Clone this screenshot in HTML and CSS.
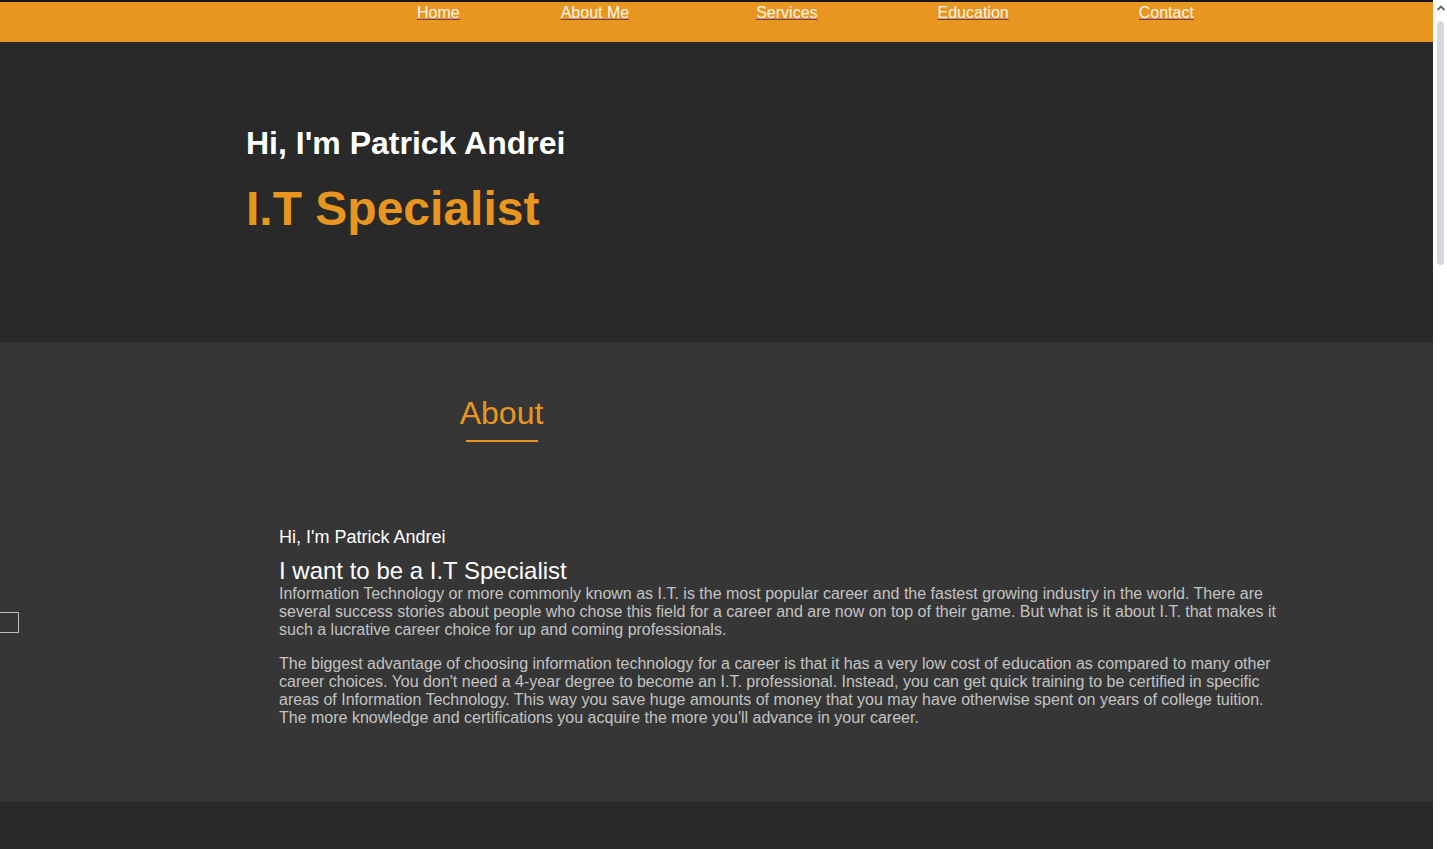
FILE: index.html
```html
<!DOCTYPE html>
<html lang="en">
<head>
<meta charset="utf-8">
<title>Patrick Andrei</title>
<link rel="stylesheet" href="styles.css">
</head>
<body>
<nav class="navbar">
  <ul class="nav-list">
    <li class="nav-item"><a href="#home" class="nav-link">Home</a></li>
    <li class="nav-item"><a href="#about" class="nav-link">About Me</a></li>
    <li class="nav-item"><a href="#services" class="nav-link">Services</a></li>
    <li class="nav-item"><a href="#education" class="nav-link">Education</a></li>
    <li class="nav-item"><a href="#contact" class="nav-link">Contact</a></li>
  </ul>
</nav>
<header class="hero" id="home">
  <h1 class="hero-hi">Hi, I'm Patrick Andrei</h1>
  <h2 class="hero-role">I.T Specialist</h2>
</header>
<section class="about" id="about">
  <div class="about-title-wrap">
    <h2 class="about-title">About</h2>
    <div class="about-rule"></div>
  </div>
  <div class="about-body">
    <h4 class="about-hi">Hi, I'm Patrick Andrei</h4>
    <h3 class="about-want">I want to be a I.T Specialist</h3>
    <p class="about-text">Information Technology or more commonly known as I.T. is the most popular career and the fastest growing industry in the world. There are several success stories about people who chose this field for a career and are now on top of their game. But what is it about I.T. that makes it such a lucrative career choice for up and coming professionals.</p>
    <p class="about-text">The biggest advantage of choosing information technology for a career is that it has a very low cost of education as compared to many other career choices. You don't need a 4-year degree to become an I.T. professional. Instead, you can get quick training to be certified in specific areas of Information Technology. This way you save huge amounts of money that you may have otherwise spent on years of college tuition. The more knowledge and certifications you acquire the more you'll advance in your career.</p>
  </div>
  <div class="side-box"></div>
</section>
<section class="services" id="services"></section>
<div class="fake-scrollbar" aria-hidden="true">
  <svg class="scroll-arrow" width="14" height="14" viewBox="0 0 14 14">
    <path d="M3.5 9 L7 5.5 L10.5 9" fill="none" stroke="#5f6368" stroke-width="1.8"/>
  </svg>
  <div class="scroll-thumb"></div>
</div>
</body>
</html>
```
FILE: styles.css
```css
html, body {
  margin: 0;
  padding: 0;
}
body {
  background: #292929;
  font-family: "Liberation Sans", Arial, sans-serif;
  color: #ffffff;
}
.navbar {
  background: #e8961f;
  border-top: 2px solid #161616;
  height: 40px;
}
.nav-list {
  list-style: none;
  margin: 0;
  padding: 0 0 0 417px;
  display: flex;
}
.nav-item {
  line-height: 18px;
  font-size: 16px;
  padding-top: 2px;
}
.nav-item:nth-child(2) { margin-left: 101px; }
.nav-item:nth-child(3) { margin-left: 127px; }
.nav-item:nth-child(4) { margin-left: 120px; }
.nav-item:nth-child(5) { margin-left: 130px; }
.nav-link {
  color: #fff8ea;
  text-decoration: underline;
  text-decoration-color: #6a3f75;
}
.hero {
  height: 300px;
  background: #292929;
  padding-left: 246px;
  box-sizing: border-box;
  padding-top: 83px;
}
.hero-hi {
  margin: 0;
  font-size: 32px;
  font-weight: bold;
  line-height: 37px;
  color: #ffffff;
}
.hero-role {
  margin: 19px 0 0;
  font-size: 48px;
  font-weight: bold;
  line-height: 55px;
  color: #e8961f;
}
.about {
  position: relative;
  background: #363636;
  height: 460px;
  box-sizing: border-box;
  padding-top: 53px;
}
.about-title-wrap {
  margin-left: 460px;
  width: 83px;
  display: flex;
  flex-direction: column;
  align-items: center;
}
.about-title {
  margin: 0;
  font-size: 32px;
  font-weight: normal;
  line-height: 37px;
  color: #e8961f;
}
.about-rule {
  margin-top: 8px;
  width: 72px;
  height: 2px;
  background: #e8961f;
}
.about-body {
  margin: 85px 0 0 279px;
  width: 1000px;
}
.about-hi {
  margin: 0;
  font-size: 18px;
  font-weight: normal;
  line-height: 21px;
  color: #ffffff;
}
.about-want {
  margin: 9px 0 0;
  font-size: 24px;
  font-weight: normal;
  line-height: 28px;
  color: #ffffff;
}
.about-text {
  margin: 0 0 16px;
  font-size: 16px;
  line-height: 18px;
  color: #c3c3c3;
}
.side-box {
  position: absolute;
  left: -2px;
  top: 270px;
  width: 19px;
  height: 19px;
  border: 1px solid #bdbdbd;
}
.services {
  height: 2000px;
  background: #292929;
}
.fake-scrollbar {
  position: fixed;
  top: 0;
  right: 0;
  width: 14px;
  height: 100%;
  background: #ffffff;
}
.scroll-arrow {
  display: block;
  margin: 1px 0 0 1px;
}
.scroll-thumb {
  margin: 6px 0 0 4px;
  width: 7px;
  height: 244px;
  border-radius: 4px;
  background: #d4dae1;
}
```
